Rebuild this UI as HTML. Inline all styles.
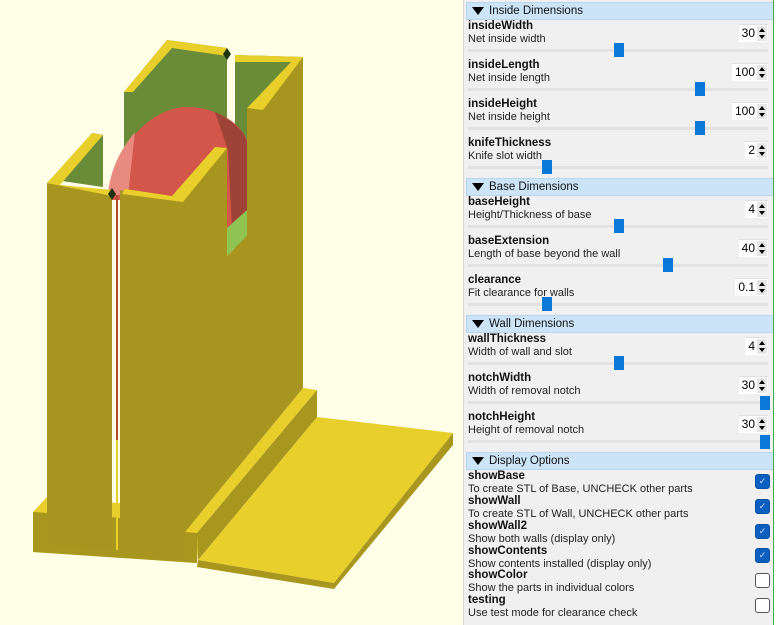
<!DOCTYPE html><html><head><style>
body{margin:0;width:776px;height:625px;background:#fffee6;position:relative;overflow:hidden;font-family:"Liberation Sans",sans-serif;}
#p{position:absolute;left:463px;top:0;width:309px;height:625px;background:#f0f0f0;border-left:1px solid #d8d8d8;}
#g{position:absolute;left:773px;top:0;width:3px;height:625px;background:#fff;border-left:1px solid #3cb050;}
.h{position:absolute;left:2px;width:306px;height:16px;background:#cce4f7;border:1px solid #b8d6f0;font-size:11.5px;line-height:16px;color:#111;}
.h:before{content:"";display:inline-block;margin:0 5px 0 5px;border-left:6px solid transparent;border-right:6px solid transparent;border-top:8px solid #000;vertical-align:-1px}
.n{position:absolute;left:4px;font-size:11.5px;font-weight:bold;color:#111;line-height:14px}
.d{position:absolute;left:4px;font-size:11px;color:#222;line-height:14px}
.t{position:absolute;left:4px;width:300px;height:3px;background:#e2e2e2;}
.k{position:absolute;width:10px;height:14px;background:#0a78d7;}
.s{position:absolute;right:5px;height:17px;background:#fff;font-size:12px;line-height:17px;padding-right:13px;padding-left:3px;border-top:1px solid #e0e0e0}
.s:after{content:"";position:absolute;right:1px;top:1px;width:10px;height:15px;background:#e6e6e6;}
.s b{position:absolute;right:3px;top:3px;border-left:3px solid transparent;border-right:3px solid transparent;border-bottom:4px solid #000;z-index:1}
.s i{position:absolute;right:3px;top:10px;border-left:3px solid transparent;border-right:3px solid transparent;border-top:4px solid #000;z-index:1}
.c{position:absolute;left:291px;width:13px;height:13px;border-radius:3px;background:#0a5fc0;border:1px solid #0a50a0;color:#cfe0f5;font-size:9px;line-height:13px;text-align:center}
.u{position:absolute;left:291px;width:13px;height:13px;border-radius:3px;background:#fff;border:1px solid #555}
</style></head><body>
<svg width="463" height="625" style="position:absolute;left:0;top:0">
<polygon points="33,512 47,497 200,510 197,563 33,552" fill="#e9cf2b"/>
<polygon points="33,512 197,523 197,563 33,552" fill="#a8961e"/>
<polygon points="317,417 453,433 334,583 198,560" fill="#e9cf2b"/>
<polygon points="453,433 453,445 334,589 334,583" fill="#a8961e"/>
<polygon points="198,560 334,583 334,589 197,567" fill="#a8961e"/>
<polygon points="303,388 317,390 197,533 185,532" fill="#e9cf2b"/>
<polygon points="317,390 317,417 198,560 197,533" fill="#a8961e"/>
<polygon points="124,92 167,40 227,48 227,300 124,300" fill="#6a8b38"/>
<polygon points="235,55 303,57 263,110 247,108 247,240 235,250" fill="#6a8b38"/>
<polygon points="124,92 167,40 227,48 227,56 172,48 133,92" fill="#e9cf2b"/>
<polygon points="235,55 303,57 263,112 247,108 251,104 291,62 235,62" fill="#e9cf2b"/>
<path d="M108,195 C112,150 150,107 187,107 C215,107 240,122 247,140 L247,215 L227,235 L227,200 L112,200 Z" fill="#d2574a"/>
<path d="M108,195 C110,170 120,150 135,132 L128,195 Z" fill="#e88a80"/>
<path d="M215,112 C232,120 244,130 247,142 L247,212 L232,228 L228,150 Z" fill="#6a3026" opacity="0.5"/>
<polygon points="227,228 247,210 247,236 227,256" fill="#8fc452"/>
<polygon points="55,180 92,133 103,135 103,187" fill="#6a8b38"/>
<polygon points="47,183 112,193 112,550 47,545" fill="#a8951f"/>
<polygon points="120,190 183,200 227,148 227,256 247,236 247,108 263,110 303,57 303,388 185,532 185,560 120,555" fill="#a8951f"/>
<polygon points="47,183 92,133 103,135 60,185 112,190 112,196" fill="#e9cf2b"/>
<polygon points="125,189 172,196 215,147 227,148 183,202 122,194" fill="#e9cf2b"/>
<line x1="117" y1="195" x2="117" y2="550" stroke="#b0502c" stroke-width="2"/>
<line x1="117" y1="440" x2="117" y2="550" stroke="#e9cf2b" stroke-width="2"/>
<polygon points="227,48 231,54 227,60 223,54" fill="#1e3310"/>
<polygon points="112,188 116,194 112,200 108,194" fill="#1e3310"/>
</svg>
<div id="p">
<div class="h" style="top:2px">Inside Dimensions</div>
<div class="n" style="top:19px">insideWidth</div><div class="d" style="top:32px">Net inside width</div><div class="s" style="top:24px">30<b></b><i></i></div><div class="t" style="top:49px"></div><div class="k" style="left:150px;top:43px"></div>
<div class="n" style="top:58px">insideLength</div><div class="d" style="top:71px">Net inside length</div><div class="s" style="top:63px">100<b></b><i></i></div><div class="t" style="top:88px"></div><div class="k" style="left:231px;top:82px"></div>
<div class="n" style="top:97px">insideHeight</div><div class="d" style="top:110px">Net inside height</div><div class="s" style="top:102px">100<b></b><i></i></div><div class="t" style="top:127px"></div><div class="k" style="left:231px;top:121px"></div>
<div class="n" style="top:136px">knifeThickness</div><div class="d" style="top:149px">Knife slot width</div><div class="s" style="top:141px">2<b></b><i></i></div><div class="t" style="top:166px"></div><div class="k" style="left:78px;top:160px"></div>
<div class="h" style="top:178px">Base Dimensions</div>
<div class="n" style="top:195px">baseHeight</div><div class="d" style="top:208px">Height/Thickness of base</div><div class="s" style="top:200px">4<b></b><i></i></div><div class="t" style="top:225px"></div><div class="k" style="left:150px;top:219px"></div>
<div class="n" style="top:234px">baseExtension</div><div class="d" style="top:247px">Length of base beyond the wall</div><div class="s" style="top:239px">40<b></b><i></i></div><div class="t" style="top:264px"></div><div class="k" style="left:199px;top:258px"></div>
<div class="n" style="top:273px">clearance</div><div class="d" style="top:286px">Fit clearance for walls</div><div class="s" style="top:278px">0.1<b></b><i></i></div><div class="t" style="top:303px"></div><div class="k" style="left:78px;top:297px"></div>
<div class="h" style="top:315px">Wall Dimensions</div>
<div class="n" style="top:332px">wallThickness</div><div class="d" style="top:345px">Width of wall and slot</div><div class="s" style="top:337px">4<b></b><i></i></div><div class="t" style="top:362px"></div><div class="k" style="left:150px;top:356px"></div>
<div class="n" style="top:371px">notchWidth</div><div class="d" style="top:384px">Width of removal notch</div><div class="s" style="top:376px">30<b></b><i></i></div><div class="t" style="top:401px"></div><div class="k" style="left:296px;top:396px"></div>
<div class="n" style="top:410px">notchHeight</div><div class="d" style="top:423px">Height of removal notch</div><div class="s" style="top:415px">30<b></b><i></i></div><div class="t" style="top:440px"></div><div class="k" style="left:296px;top:435px"></div>
<div class="h" style="top:452px">Display Options</div>
<div class="n" style="top:469px">showBase</div><div class="d" style="top:482px">To create STL of Base, UNCHECK other parts</div><div class="c" style="top:474px">✓</div>
<div class="n" style="top:494px">showWall</div><div class="d" style="top:507px">To create STL of Wall, UNCHECK other parts</div><div class="c" style="top:499px">✓</div>
<div class="n" style="top:519px">showWall2</div><div class="d" style="top:532px">Show both walls (display only)</div><div class="c" style="top:524px">✓</div>
<div class="n" style="top:544px">showContents</div><div class="d" style="top:557px">Show contents installed (display only)</div><div class="c" style="top:548px">✓</div>
<div class="n" style="top:568px">showColor</div><div class="d" style="top:581px">Show the parts in individual colors</div><div class="u" style="top:573px"></div>
<div class="n" style="top:593px">testing</div><div class="d" style="top:606px">Use test mode for clearance check</div><div class="u" style="top:598px"></div>
</div>
<div id="g"></div>
</body></html>
